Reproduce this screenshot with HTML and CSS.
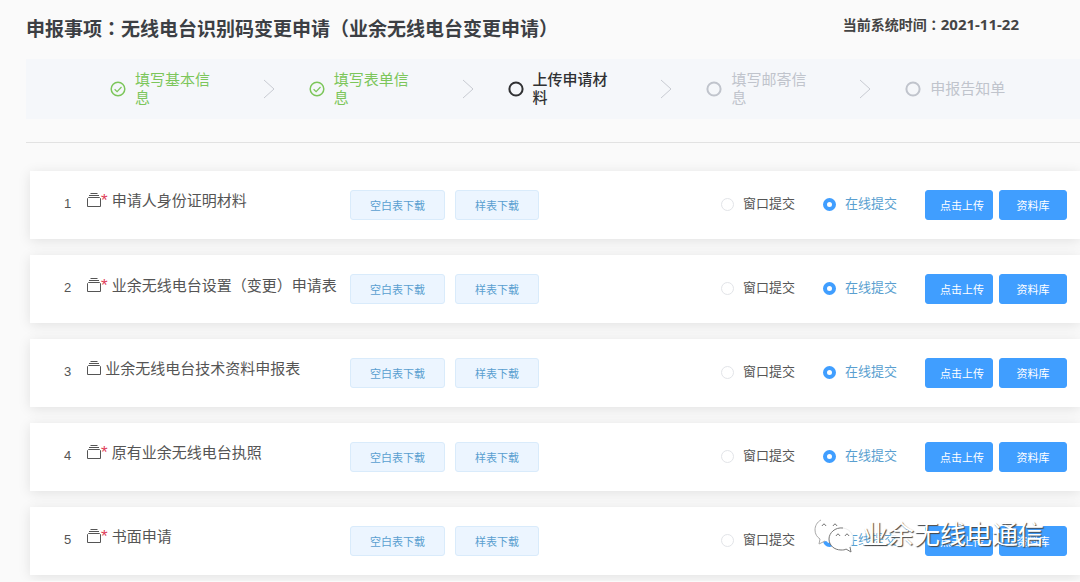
FILE: index.html
```html
<!DOCTYPE html>
<html lang="zh-CN">
<head>
    <meta charset="UTF-8">
    <meta name="viewport" content="width=device-width, initial-scale=1.0">
    <title>无线电台识别码变更申请</title>
    <link rel="stylesheet" href="styles.css">
</head>
<body>
    <!-- Shared icons -->
    <svg class="sprite" aria-hidden="true">
        <symbol id="icon-done" viewBox="0 0 16 16">
            <circle cx="8" cy="8" r="6.8" fill="none" stroke="currentColor" stroke-width="1.5"/>
            <path d="M4.6 8.2l2.5 2.4 4.4-4.6" fill="none" stroke="currentColor" stroke-width="1.2"/>
        </symbol>
        <symbol id="icon-circle" viewBox="0 0 16 16">
            <circle cx="8" cy="8" r="6.6" fill="none" stroke="currentColor" stroke-width="2"/>
        </symbol>
        <symbol id="icon-arrow" viewBox="0 0 12 20">
            <path d="M1 1l10 9-10 9" fill="none" stroke="currentColor" stroke-width="1"/>
        </symbol>
        <symbol id="icon-box" viewBox="0 0 14 14">
            <path d="M3.500 .5h7M2 2.500h10M1.500 4.500h11l1 1v8H.5v-8z" fill="none" stroke="currentColor" stroke-width="1"/>
        </symbol>
    </svg>

    <header class="header">
        <h1>申报事项<span lang="zh-TW" class="mark">：</span>无线电台识别码变更申请<span lang="zh-TW" class="mark">（</span>业余无线电台变更申请<span lang="zh-TW" class="mark">）</span></h1>
        <div class="time">当前系统时间<span lang="zh-TW" class="mark">：</span><span class="date">2021-11-22</span></div>
    </header>

    <!-- Steps -->
    <ol class="steps">
        <li class="step done">
            <svg class="step-icon"><use href="#icon-done"/></svg>
            <span class="step-title">填写基本信息</span>
            <svg class="arrow"><use href="#icon-arrow"/></svg>
        </li>
        <li class="step done">
            <svg class="step-icon"><use href="#icon-done"/></svg>
            <span class="step-title">填写表单信息</span>
            <svg class="arrow"><use href="#icon-arrow"/></svg>
        </li>
        <li class="step active">
            <svg class="step-icon"><use href="#icon-circle"/></svg>
            <span class="step-title">上传申请材料</span>
            <svg class="arrow"><use href="#icon-arrow"/></svg>
        </li>
        <li class="step">
            <svg class="step-icon"><use href="#icon-circle"/></svg>
            <span class="step-title">填写邮寄信息</span>
            <svg class="arrow"><use href="#icon-arrow"/></svg>
        </li>
        <li class="step">
            <svg class="step-icon"><use href="#icon-circle"/></svg>
            <span class="step-title">申报告知单</span>
        </li>
    </ol>

    <!-- Materials -->
    <main class="list">
        <div class="card">
            <span class="number">1</span>
            <div class="name"><svg class="box"><use href="#icon-box"/></svg><span class="required">*</span> 申请人身份证明材料</div>
            <div class="downloads">
                <button type="button" class="btn plain">空白表下载</button>
                <button type="button" class="btn plain">样表下载</button>
            </div>
            <div class="radios">
                <label><input type="radio" name="m1"><span>窗口提交</span></label>
                <label><input type="radio" name="m1" checked><span>在线提交</span></label>
            </div>
            <div class="actions">
                <button type="button" class="btn primary upload">点击上传</button>
                <button type="button" class="btn primary">资料库</button>
            </div>
        </div>
        <div class="card">
            <span class="number">2</span>
            <div class="name"><svg class="box"><use href="#icon-box"/></svg><span class="required">*</span> 业余无线电台设置<span lang="zh-TW" class="mark">（</span>变更<span lang="zh-TW" class="mark">）</span>申请表</div>
            <div class="downloads">
                <button type="button" class="btn plain">空白表下载</button>
                <button type="button" class="btn plain">样表下载</button>
            </div>
            <div class="radios">
                <label><input type="radio" name="m2"><span>窗口提交</span></label>
                <label><input type="radio" name="m2" checked><span>在线提交</span></label>
            </div>
            <div class="actions">
                <button type="button" class="btn primary upload">点击上传</button>
                <button type="button" class="btn primary">资料库</button>
            </div>
        </div>
        <div class="card">
            <span class="number">3</span>
            <div class="name"><svg class="box"><use href="#icon-box"/></svg> 业余无线电台技术资料申报表</div>
            <div class="downloads">
                <button type="button" class="btn plain">空白表下载</button>
                <button type="button" class="btn plain">样表下载</button>
            </div>
            <div class="radios">
                <label><input type="radio" name="m3"><span>窗口提交</span></label>
                <label><input type="radio" name="m3" checked><span>在线提交</span></label>
            </div>
            <div class="actions">
                <button type="button" class="btn primary upload">点击上传</button>
                <button type="button" class="btn primary">资料库</button>
            </div>
        </div>
        <div class="card">
            <span class="number">4</span>
            <div class="name"><svg class="box"><use href="#icon-box"/></svg><span class="required">*</span> 原有业余无线电台执照</div>
            <div class="downloads">
                <button type="button" class="btn plain">空白表下载</button>
                <button type="button" class="btn plain">样表下载</button>
            </div>
            <div class="radios">
                <label><input type="radio" name="m4"><span>窗口提交</span></label>
                <label><input type="radio" name="m4" checked><span>在线提交</span></label>
            </div>
            <div class="actions">
                <button type="button" class="btn primary upload">点击上传</button>
                <button type="button" class="btn primary">资料库</button>
            </div>
        </div>
        <div class="card">
            <span class="number">5</span>
            <div class="name"><svg class="box"><use href="#icon-box"/></svg><span class="required">*</span> 书面申请</div>
            <div class="downloads">
                <button type="button" class="btn plain">空白表下载</button>
                <button type="button" class="btn plain">样表下载</button>
            </div>
            <div class="radios">
                <label><input type="radio" name="m5"><span>窗口提交</span></label>
                <label><input type="radio" name="m5" checked><span>在线提交</span></label>
            </div>
            <div class="actions">
                <button type="button" class="btn primary upload">点击上传</button>
                <button type="button" class="btn primary">资料库</button>
            </div>
            <!-- Account watermark -->
            <div class="watermark">
                <svg class="wechat" viewBox="0 0 40 36">
                    <path d="M15 1C7 1 1 6 1 13c0 4 2 7 5 9l-1 5 6-3c9 2 18-2 18-11C29 6 23 1 15 1z" fill="#fff"/>
                    <path d="M7 3C3 5 1 9 1 13c0 4 2 7 5 9l-1 5 6-3" fill="none" stroke="#aaa" stroke-width="1"/>
                    <path d="M27 11c-7 0-12 5-12 11s5 11 12 11c2 0 4 0 5-1l5 3-1-5c2-2 3-5 3-8 0-6-5-11-12-11z" fill="#fff"/>
                    <path d="M29 11c-8-1-14 5-14 11s5 11 12 11c2 0 4 0 5-1l5 3-1-5" fill="none" stroke="#777" stroke-width="1"/>
                    <path d="M29 11c6 1 10 5 10 11 0 3-1 6-3 8" fill="none" stroke="#eee" stroke-width="1"/>
                    <path d="M8 9q2-4 4 0M19 9q2-4 4 0M22 19q2-4 4 0M31 19q2-4 4 0" fill="none" stroke="#777" stroke-width="1"/>
                </svg>
                <span>业余无线电通信</span>
            </div>
        </div>
    </main>
</body>
</html>
```
FILE: styles.css
```css
* {
    box-sizing: border-box;
}
body {
    font-family: "Liberation Sans", "Noto Sans CJK SC", sans-serif;
    background-color: #fafafa;
    color: #555;
    margin: 0;
    padding: 15px 0 6px 26px;
}
.sprite {
    display: none;
}
.mark {
    font-family: "Noto Sans CJK TC", sans-serif;
}
.header {
    display: flex;
    justify-content: space-between;
    align-items: flex-start;
    padding-right: 61px;
    height: 44px;
}
h1 {
    margin: 0;
    font-size: 19px;
    line-height: 26px;
    font-weight: bold;
    color: #3c3f44;
}
.time {
    font-family: "Noto Sans", "Noto Sans CJK SC", sans-serif;
    font-size: 14px;
    line-height: 18px;
    font-weight: bold;
    color: #444;
}
.date {
    font-size: 15px;
}

/* Steps */
.steps {
    display: flex;
    list-style: none;
    margin: 0;
    padding: 0 10px 0 50px;
    height: 60px;
    background-color: #f5f7fa;
}
.step {
    flex: 1;
    display: flex;
    align-items: center;
    padding-left: 34px;
    font-size: 15px;
    line-height: 18px;
    color: #c0c4cc;
}
.step-icon {
    flex: none;
    width: 16px;
    height: 16px;
    margin-right: 9px;
}
.step-title {
    width: 76px;
}
.step.done {
    color: #7cc65a;
}
.step.active {
    color: #303133;
}
.step.active .step-title {
    font-weight: 500;
}
.arrow {
    width: 12px;
    height: 20px;
    margin-left: auto;
    color: #c8cbd2;
}

/* Materials */
.list {
    display: flex;
    flex-direction: column;
    gap: 16px;
    margin-top: 23px;
    padding: 28px 0 0 4px;
    border-top: 1px solid #e2e2e2;
}
.card {
    position: relative;
    display: flex;
    align-items: center;
    height: 68px;
    padding: 0 13px 0 34px;
    background-color: #fff;
    box-shadow: 0 2px 12px rgba(0, 0, 0, 0.1);
}
.number {
    width: 23px;
    font-size: 13px;
    line-height: 18px;
    padding-bottom: 3px;
}
.name {
    width: 263px;
    padding-bottom: 8px;
    font-size: 15px;
    line-height: 20px;
    white-space: nowrap;
}
.box {
    width: 14px;
    height: 14px;
    vertical-align: -1px;
}
.required {
    color: #e0405a;
    font-size: 17px;
    line-height: 18px;
}
.downloads {
    display: flex;
    gap: 10px;
}
.btn {
    height: 30px;
    border: 1px solid;
    border-radius: 3px;
    font-family: inherit;
    font-size: 11px;
    cursor: pointer;
}
.plain {
    padding: 0 19px;
    background-color: #ecf5ff;
    border-color: #d9ebfb;
    color: #5a9fd0;
}
.primary {
    padding: 0 11px;
    min-width: 68px;
    background-color: #409eff;
    border-color: #409eff;
    color: #fff;
}
.upload {
    padding: 0 8px 0 14px;
}
.radios {
    display: flex;
    gap: 28px;
    margin-left: auto;
    padding-bottom: 2px;
    font-size: 13px;
    line-height: 18px;
}
.radios label {
    display: flex;
    align-items: center;
    cursor: pointer;
}
.radios input {
    appearance: none;
    width: 13px;
    height: 13px;
    margin: 0 9px 0 0;
    border: 1px solid #e2e4e8;
    border-radius: 50%;
    background-color: #fff;
}
.radios input:checked {
    border: 4px solid #409eff;
}
.radios input:checked + span {
    color: #5a9fd0;
}
.actions {
    display: flex;
    gap: 6px;
    margin-left: 28px;
}

/* Watermark */
.watermark {
    position: absolute;
    right: 36px;
    top: 10px;
    display: flex;
    align-items: center;
    gap: 8px;
    font-size: 26px;
    line-height: 36px;
    color: #fff;
    text-shadow: 1px 1px 1px #444;
    pointer-events: none;
}
.wechat {
    width: 40px;
    height: 36px;
}
```
